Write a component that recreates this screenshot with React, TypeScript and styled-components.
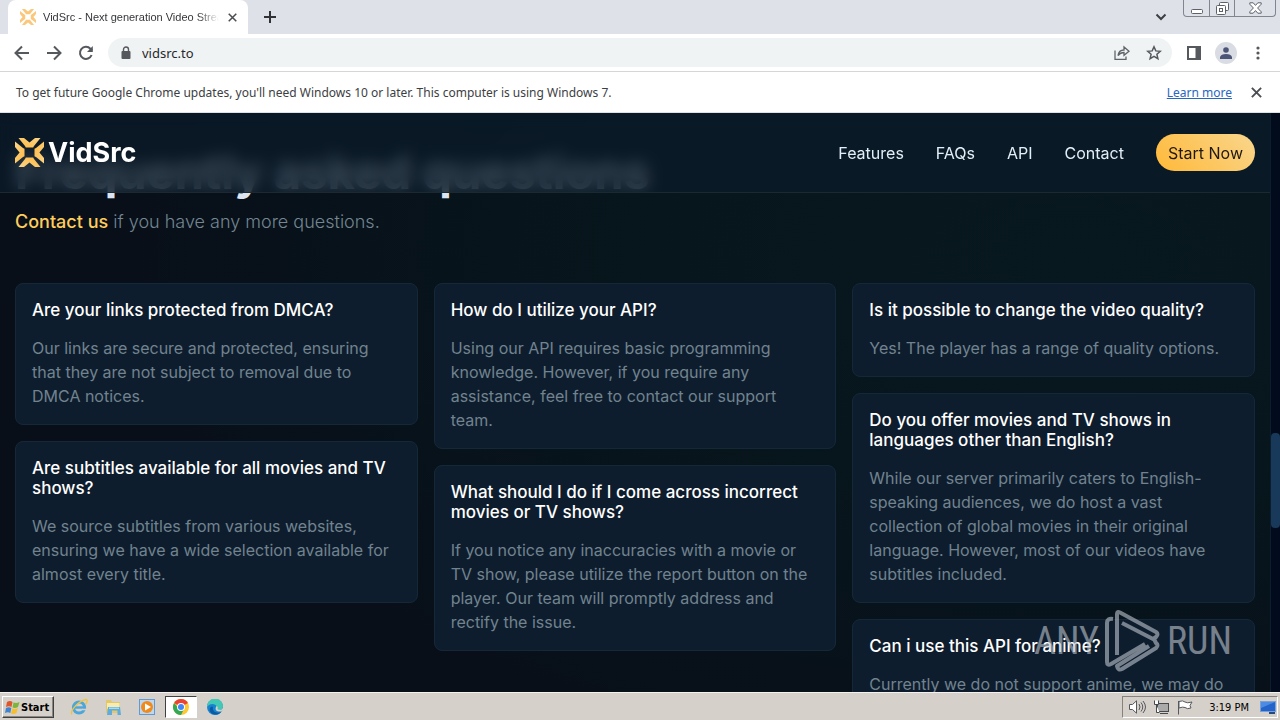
import React from "react";
import styled, { createGlobalStyle, css } from "styled-components";

const uiFont = `"Noto Sans", "DejaVu Sans Condensed", sans-serif`;
const taskbarFont = `"DejaVu Sans Condensed", "Noto Sans", sans-serif`;

const GlobalStyle = createGlobalStyle`
  * { box-sizing: border-box; }
  body { margin: 0; background: #070e18; font-family: Inter, sans-serif; }
  button { font: inherit; color: inherit; border: 0; padding: 0; background: none; cursor: pointer; }
  h2, h3, p, ul { margin: 0; padding: 0; font-weight: 400; }
  svg { display: block; }
`;

const Screen = styled.div`
  height: 100vh;
  display: flex;
  flex-direction: column;
  overflow: hidden;
`;

/* ---------- browser window ---------- */

const TabStrip = styled.header`
  display: flex;
  height: 34px;
  flex: none;
  padding-left: 8px;
  background: #dee1e8;
  font-family: "Liberation Sans", sans-serif;
  color: #35363a;
`;

const Tab = styled.div`
  display: flex;
  align-items: center;
  width: 240px;
  padding: 0 10px 0 12px;
  gap: 7px;
  background: #fff;
  border-radius: 8px 8px 0 0;
  font-size: 11px;
`;

const TabTitle = styled.span`
  flex: 1;
  overflow: hidden;
  white-space: nowrap;
  mask-image: linear-gradient(90deg, #000 88%, transparent);
`;

const IconButton = styled.button<{ $w?: number; $round?: boolean }>`
  display: flex;
  align-items: center;
  justify-content: center;
  flex: none;
  width: ${(p) => p.$w ?? 32}px;
  height: ${(p) => (p.$round ? `${p.$w}px` : "auto")};
  border-radius: ${(p) => (p.$round ? "50%" : "0")};
  color: #5f6368;
  ${(p) =>
    p.$round &&
    css`
      margin-left: 5px;
      background: #d9dde3;
    `}
`;

const Spacer = styled.div`
  flex: 1;
`;

const WindowButtons = styled.div`
  display: flex;
  height: 17px;
  margin: 0 4px 0 6px;
  border: 1px solid #80868f;
  border-top: 0;
  border-radius: 0 0 4px 4px;
`;

const WindowButton = styled.button<{ $w: number }>`
  display: flex;
  justify-content: center;
  align-items: center;
  width: ${(p) => p.$w}px;
  & + & { border-left: 1px solid #80868f; }
`;

const Toolbar = styled.div`
  display: flex;
  align-items: center;
  flex: none;
  height: 38px;
  padding: 0 1px 0 6px;
  background: #fff;
  border-bottom: 1px solid #d4d6d9;
`;

const AddressBar = styled.label`
  display: flex;
  align-items: center;
  flex: 1;
  height: 29px;
  margin: 0 6px;
  padding: 0 2px 0 12px;
  gap: 10px;
  background: #f0f3f4;
  border-radius: 15px;
`;

const AddressInput = styled.input`
  flex: 1;
  min-width: 0;
  border: 0;
  padding: 0;
  outline: 0;
  background: none;
  color: #26282b;
  font-family: ${uiFont};
  font-size: 13px;
`;

const AddressActions = styled.div`
  display: flex;
`;

const InfoBar = styled.div`
  display: flex;
  align-items: center;
  flex: none;
  height: 41px;
  padding: 0 8px 0 16px;
  gap: 8px;
  background: #fff;
  border-bottom: 1px solid #dfe2e5;
  font-family: ${uiFont};
  font-size: 12px;
  color: #3c4043;
`;

const InfoLink = styled.a`
  color: #2a66c0;
`;

/* ---------- web page ---------- */

const Viewport = styled.div`
  position: relative;
  display: flex;
  flex: 1;
  min-height: 0;
  overflow: hidden;
`;

const Page = styled.main`
  flex: 1;
  min-width: 0;
  overflow: hidden;
  background:
    radial-gradient(ellipse 75% 90% at 85% 25%, #07181e 0%, #07161c 45%, rgba(7, 14, 24, 0) 100%),
    #080f19;
`;

const Nav = styled.nav`
  position: absolute;
  inset: 0 10px auto 0;
  display: flex;
  align-items: center;
  height: 80px;
  padding: 0 15px;
  gap: 32px;
  border-bottom: 1px solid #1b2932;
  background: rgba(11, 27, 41, 0.75);
  backdrop-filter: blur(8px);
  font-size: 16px;
`;

const Brand = styled.a`
  display: flex;
  align-items: center;
  gap: 4px;
  margin-right: auto;
  color: #fff;
  font-size: 27px;
  font-weight: 700;
  text-decoration: none;
`;

const NavLink = styled.a`
  color: #e3eff8;
  text-decoration: none;
`;

const StartButton = styled.button`
  height: 37px;
  padding: 0 12px;
  border-radius: 19px;
  background: linear-gradient(45deg, #ffb938, #f9d68d);
  color: #201810;
`;

const Faq = styled.section`
  padding: 29px 15px 0;
`;

const Heading = styled.h2`
  color: #dde6f0;
  font-size: 47px;
  line-height: 60px;
  font-weight: 700;
`;

const Lead = styled.p`
  margin: 6px 0 48px;
  color: #748691;
  font-size: 18px;
  line-height: 27px;
  font-weight: 300;
`;

const LeadLink = styled.a`
  color: #ffcd5c;
  font-weight: 500;
  text-decoration: none;
`;

const Columns = styled.div`
  display: grid;
  grid-template-columns: repeat(3, minmax(0, 1fr));
  gap: 16px;
`;

const Column = styled.div`
  display: flex;
  flex-direction: column;
  gap: 16px;
`;

const Card = styled.article`
  padding: 16px;
  border: 1px solid #152838;
  border-radius: 8px;
  background: #0e1d2d;
`;

const Question = styled.h3`
  margin-bottom: 16px;
  color: #fff;
  font-size: 17px;
  line-height: 20px;
  font-weight: 500;
`;

const Answer = styled.p`
  color: #71838f;
  font-size: 16px;
  line-height: 24px;
`;

const ScrollTrack = styled.div`
  flex: none;
  width: 10px;
  padding-top: 320px;
  background: #020b1b;
  border-left: 1px solid #0b1e2e;
`;

const ScrollThumb = styled.div`
  height: 95px;
  border-radius: 4px;
  background: #18395a;
`;

const Watermark = styled.div`
  position: absolute;
  right: 48px;
  bottom: 20px;
  display: flex;
  align-items: center;
  gap: 6px;
  color: rgba(190, 198, 206, 0.6);
  font-family: "Roboto Condensed", Roboto, sans-serif;
  font-size: 38px;
  line-height: 62px;
  pointer-events: none;
`;

/* ---------- taskbar ---------- */

const Taskbar = styled.footer`
  display: flex;
  align-items: center;
  flex: none;
  height: 28px;
  padding: 1px 2px 0;
  background: #d5d0c9;
  border-top: 1px solid #f4f2ee;
  font-family: ${taskbarFont};
  font-size: 11px;
  color: #000;
`;

const StartMenuButton = styled.button`
  display: flex;
  align-items: center;
  gap: 1px;
  width: 52px;
  height: 22px;
  margin-right: 8px;
  padding-left: 2px;
  border: 1px solid #fff;
  border-right-color: #404040;
  border-bottom-color: #404040;
  box-shadow: inset -1px -1px #8a8680;
  font-weight: 700;
`;

const TaskItem = styled.button<{ $active?: boolean }>`
  display: flex;
  align-items: center;
  justify-content: center;
  width: 32px;
  height: 22px;
  margin: 0 1px;
  ${(p) =>
    p.$active &&
    css`
      background: #fff;
      border: 1px solid #404040;
      border-right-color: #fff;
      border-bottom-color: #fff;
    `}
`;

const Tray = styled.div`
  display: flex;
  align-items: center;
  height: 22px;
  padding: 0 1px 0 6px;
  gap: 7px;
  border: 1px solid #86827b;
  border-right-color: #fff;
  border-bottom-color: #fff;
`;

const Clock = styled.time`
  margin: 0 4px 0 8px;
`;

/* ---------- drawings ---------- */

const Logo = ({ size, color = "url(#gold)" }: { size: number; color?: string }) => (
  <svg width={size} height={size} viewBox="0 0 29 29" fill={color} aria-hidden>
    <defs>
      <linearGradient id="gold" x1="0" y1="1" x2="1" y2="0">
        <stop offset="0" stopColor="#ffba40" />
        <stop offset="1" stopColor="#fbd48a" />
      </linearGradient>
    </defs>
    {[0, 90, 180, 270].map((r) => (
      <path key={r} transform={`rotate(${r} 14.5 14.5)`} d="M3.500 0H9l5.500 4.600L20 0h5.500L19 8l-.8 1.500h-7.400L10 8z" />
    ))}
  </svg>
);

const Cross = ({ size }: { size: number }) => (
  <svg width={size} height={size} viewBox="0 0 10 10" stroke="#4a4d51" strokeWidth="1.700">
    <path d="M.8.8l8.400 8.400M9.200.8L.8 9.200" />
  </svg>
);

const Arrow = ({ flip }: { flip?: boolean }) => (
  <svg width="16" height="16" viewBox="0 0 16 16" fill="none" stroke="#55585c" strokeWidth="2">
    <path transform={flip ? "rotate(180 8 8)" : undefined} d="M15 8H2M8 1.500L1.500 8 8 14.500" />
  </svg>
);

const Play = () => (
  <svg width="56" height="62" viewBox="0 0 56 62" fill="none" stroke="currentColor" strokeWidth="4" strokeLinejoin="round">
    <path d="M12 45V4q0-3 3-1.500L51 22q3 2 0 5l-3 2L17 13M8 9Q2 8 2 13v39q0 4 4 2l34-20M49 29l2 4q3 2 0 5L17 59q-4 2-5-3l32-20" />
  </svg>
);

const tabs = ["Features", "FAQs", "API", "Contact"];

const columns = [
  [
    ["Are your links protected from DMCA?", "Our links are secure and protected, ensuring that they are not subject to removal due to DMCA notices."],
    ["Are subtitles available for all movies and TV shows?", "We source subtitles from various websites, ensuring we have a wide selection available for almost every title."],
  ],
  [
    ["How do I utilize your API?", "Using our API requires basic programming knowledge. However, if you require any assistance, feel free to contact our support team."],
    ["What should I do if I come across incorrect movies or TV shows?", "If you notice any inaccuracies with a movie or TV show, please utilize the report button on the player. Our team will promptly address and rectify the issue."],
  ],
  [
    ["Is it possible to change the video quality?", "Yes! The player has a range of quality options."],
    ["Do you offer movies and TV shows in languages other than English?", "While our server primarily caters to English-speaking audiences, we do host a vast collection of global movies in their original language. However, most of our videos have subtitles included."],
    ["Can i use this API for anime?", "Currently we do not support anime, we may do"],
  ],
];

export default function App() {
  return (
    <Screen>
      <GlobalStyle />
      <TabStrip>
        <Tab>
          <Logo size={16} color="#fbc77c" />
          <TabTitle>VidSrc - Next generation Video Streaming</TabTitle>
          <IconButton $w={12} aria-label="Close tab"><Cross size={9} /></IconButton>
        </Tab>
        <IconButton $w={44} aria-label="New tab">
          <svg width="12" height="12" viewBox="0 0 12 12" stroke="#303236" strokeWidth="2"><path d="M6 0v12M0 6h12" /></svg>
        </IconButton>
        <Spacer />
        <IconButton $w={32} aria-label="Search tabs">
          <svg width="12" height="8" viewBox="0 0 12 8" fill="none" stroke="#3c4043" strokeWidth="2"><path d="M1.500 1.500L6 6l4.500-4.500" /></svg>
        </IconButton>
        <WindowButtons>
          <WindowButton $w={25} aria-label="Minimize">
            <svg width="12" height="14" viewBox="0 0 12 14" fill="#fff" stroke="#5d6168"><rect x=".5" y="8.500" width="11" height="4" rx="1" /></svg>
          </WindowButton>
          <WindowButton $w={25} aria-label="Restore">
            <svg width="13" height="13" viewBox="0 0 13 13" fill="#fff" stroke="#5d6168"><rect x="3.500" y=".5" width="9" height="8" rx="1" /><rect x=".5" y="3.500" width="9" height="9" rx="1" /><rect x="3.500" y="6.500" width="3" height="3" /></svg>
          </WindowButton>
          <WindowButton $w={41} aria-label="Close">
            <svg width="13" height="12" viewBox="0 0 13 12" fill="#fff" stroke="#5d6168"><path d="M.8 .8h3.400l2.300 2.600L8.800.8h3.400v1.400L8.600 6l3.600 3.800v1.400H8.800L6.500 8.600l-2.300 2.600H.8V9.800L4.400 6 .8 2.200z" /></svg>
          </WindowButton>
        </WindowButtons>
      </TabStrip>

      <Toolbar>
        <IconButton aria-label="Back"><Arrow /></IconButton>
        <IconButton aria-label="Forward"><Arrow flip /></IconButton>
        <IconButton aria-label="Reload">
          <svg width="16" height="16" viewBox="0 0 16 16" fill="none" stroke="#55585c" strokeWidth="2"><path d="M13.600 10A6 6 0 1 1 12.400 3.800L14 5.500" /><path d="M14.800 1v6H9z" fill="#55585c" stroke="none" /></svg>
        </IconButton>
        <AddressBar>
          <svg width="12" height="14" viewBox="0 0 12 14" fill="#55585c"><rect x="1.500" y="5" width="9" height="8" rx="1" /><path d="M3.500 5.500V3.500a2.500 2.500 0 0 1 5 0v2" fill="none" stroke="#55585c" strokeWidth="1.400" /></svg>
          <AddressInput aria-label="Address" defaultValue="vidsrc.to" />
          <AddressActions>
            <IconButton aria-label="Share">
              <svg width="16" height="16" viewBox="0 0 16 16" fill="none" stroke="#5f6368" strokeWidth="1.300"><path d="M1 5.500V14.300h11V11.500M4 10.500C4.500 7 6.500 5 10 5V2l5 4.200L10 10.300V7.500C7.500 7.500 5.500 8.500 4 10.500z" /></svg>
            </IconButton>
            <IconButton aria-label="Bookmark">
              <svg width="16" height="16" viewBox="0 0 16 16" fill="none" stroke="#55585c" strokeWidth="1.500"><path d="M8 1.800l1.800 4.100 4.500.4-3.400 3 1 4.400L8 11.400l-3.900 2.300 1-4.400-3.400-3 4.500-.4z" /></svg>
            </IconButton>
          </AddressActions>
        </AddressBar>
        <IconButton aria-label="Side panel">
          <svg width="14" height="14" viewBox="0 0 14 14"><path d="M0 0h14v14H0zM2 2v10h6.500V2z" fill="#55585c" fillRule="evenodd" /></svg>
        </IconButton>
        <IconButton $w={22} $round aria-label="Profile">
          <svg width="12" height="12" viewBox="0 0 12 12" fill="#4a5578"><circle cx="6" cy="3" r="2.800" /><path d="M0 12V10q1-3 6-3t6 3v2z" /></svg>
        </IconButton>
        <IconButton $w={42} aria-label="Menu">
          <svg width="4" height="14" viewBox="0 0 4 14" fill="#55585c"><circle cx="2" cy="2" r="1.600" /><circle cx="2" cy="7" r="1.600" /><circle cx="2" cy="12" r="1.600" /></svg>
        </IconButton>
      </Toolbar>

      <InfoBar>
        <span>To get future Google Chrome updates, you'll need Windows 10 or later. This computer is using Windows 7.</span>
        <Spacer />
        <InfoLink href="#learn">Learn more</InfoLink>
        <IconButton aria-label="Dismiss"><Cross size={11} /></IconButton>
      </InfoBar>

      <Viewport>
        <Page>
          <Faq>
            <Heading>Frequently asked questions</Heading>
            <Lead><LeadLink href="#contact">Contact us</LeadLink> if you have any more questions.</Lead>
            <Columns>
              {columns.map((cards, i) => (
                <Column key={i}>
                  {cards.map(([q, a]) => (
                    <Card key={q}>
                      <Question>{q}</Question>
                      <Answer>{a}</Answer>
                    </Card>
                  ))}
                </Column>
              ))}
            </Columns>
          </Faq>
        </Page>
        <ScrollTrack><ScrollThumb /></ScrollTrack>
        <Nav>
          <Brand href="#home"><Logo size={29} />VidSrc</Brand>
          {tabs.map((t) => <NavLink key={t} href={`#${t}`}>{t}</NavLink>)}
          <StartButton>Start Now</StartButton>
        </Nav>
        <Watermark><span>ANY</span><Play /><span>RUN</span></Watermark>
      </Viewport>

      <Taskbar>
        <StartMenuButton>
          <svg width="15" height="15" viewBox="0 0 15 15">
            <path d="M2 2q3-2 5.500 0L6.500 7Q4 5.500 1 7z" fill="#e0562b" /><path d="M8.500 2.500q3 1 6-.5l-1.500 5q-3 1.500-5.500.5z" fill="#7cb53a" />
            <path d="M1 8q3-1.500 5.300 0l-1 5Q3 11.500 0 13z" fill="#3f82cf" /><path d="M7.300 8.500q3 1 5.500-.5l-1.300 5q-3 1.500-5.500.5z" fill="#f5be2e" />
          </svg>
          Start
        </StartMenuButton>
        <TaskItem aria-label="Internet Explorer">
          <svg width="18" height="18" viewBox="0 0 18 18" fill="none"><circle cx="9" cy="9.500" r="5.500" stroke="#4ba6dc" strokeWidth="3.200" /><path d="M5 9.500h10" stroke="#4ba6dc" strokeWidth="2.400" /><path d="M12 11.500h5" stroke="#d5d0c9" strokeWidth="1.500" /><path d="M2 16.500C-1 14 8 3 16 1.500c2 0 1 3-.5 5" stroke="#edc443" strokeWidth="1.400" /></svg>
        </TaskItem>
        <TaskItem aria-label="Explorer">
          <svg width="18" height="18" viewBox="0 0 18 18"><path d="M2 2h5l1 2h8v11H2z" fill="#e3c869" /><path d="M3 5h12.500v6H3z" fill="#f7ebb1" /><path d="M4 9h12l1 8h-3.500v-4.500H8V17H3z" fill="#5facdb" /><path d="M5 9.500h10v1.500H5z" fill="#a9d8ef" /></svg>
        </TaskItem>
        <TaskItem aria-label="Media Player">
          <svg width="16" height="16" viewBox="0 0 16 16"><rect x=".5" y=".5" width="15" height="15" fill="#bcd7ef" stroke="#5f9bd2" /><circle cx="8" cy="8" r="6" fill="#f18a1d" /><path d="M6 4.500v7L12 8z" fill="#fff" /></svg>
        </TaskItem>
        <TaskItem $active aria-label="Chrome">
          <svg width="16" height="16" viewBox="0 0 16 16"><circle cx="8" cy="8" r="8" fill="#fcc934" /><path d="M8 8L1.070 4A8 8 0 0 1 14.930 4z" fill="#ea4335" /><path d="M8 8h-3.500L1.070 4A8 8 0 0 0 8 16l3-6z" fill="#34a853" /><circle cx="8" cy="8" r="4" fill="#fff" /><circle cx="8" cy="8" r="3" fill="#4285f4" /></svg>
        </TaskItem>
        <TaskItem aria-label="Edge">
          <svg width="16" height="16" viewBox="0 0 16 16"><circle cx="8" cy="8" r="8" fill="#1684cf" /><path d="M0 8A8 8 0 0 1 16 7c0 3-2 4-4 4s-3-1-2-2.500C10 5 3 3 0 8z" fill="#44c8b6" /><path d="M6 8c-1 4 3 7 8 5-4 5-13 2-11-4 1-1.500 2-2 3-1z" fill="#0c59a4" /><path d="M9.500 7c2 1 1 2 1 3 2 1.500 4 1 5.500-1V11l-2 1.500C10 13 7 11 9.500 7z" fill="#d5d0c9" /></svg>
        </TaskItem>
        <Spacer />
        <Tray>
          <svg width="17" height="14" viewBox="0 0 17 14" fill="#fff" stroke="#55585c"><path d="M.5 4.500h3L7.500.8v12.400L3.500 9.500h-3z" /><path d="M10 4q2 3 0 6M12 2.500q3.500 4.500 0 9M14 1q5 6 0 12" fill="none" /></svg>
          <svg width="17" height="15" viewBox="0 0 17 15" fill="#fff" stroke="#46494d"><rect x="4.500" y="3.500" width="11" height="8" fill="#aaa" /><path d="M7 13.500h8M1.500.5v4h4v-4M3.500 5v7.500h3" /></svg>
          <svg width="17" height="15" viewBox="0 0 17 15" fill="#fff" stroke="#55585c"><path d="M1.500 1v13.500M2 1.500q4-1.500 6 .5 2 1.500 7 0l-2 3.500 1 2.500q-4 1.500-6-.5-2-1-6 .5z" /></svg>
          <Clock>3:19 PM</Clock>
          <svg width="16" height="14" viewBox="0 0 16 14"><rect x=".5" y="1.500" width="15" height="10" fill="#2463c9" stroke="#7aa0d8" /><path d="M1 2h14L1 8z" fill="#4c8be4" /><path d="M9 12h6v2H9z" fill="#26497e" /></svg>
        </Tray>
      </Taskbar>
    </Screen>
  );
}
